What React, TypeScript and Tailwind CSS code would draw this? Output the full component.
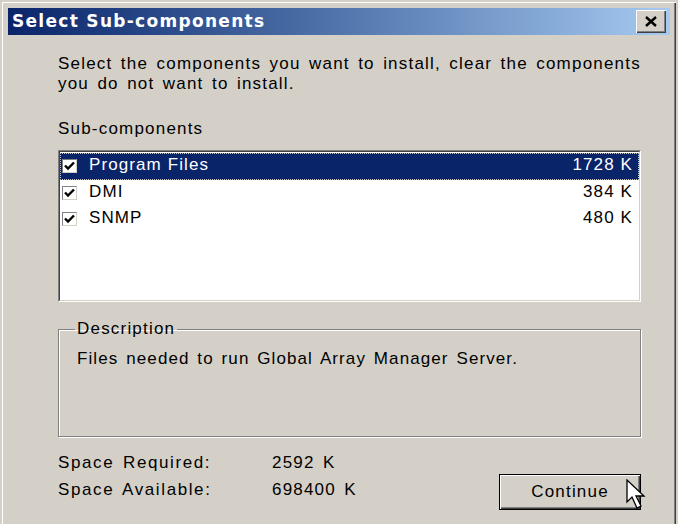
import { useState } from 'react';

type Part = { name: string; size: string };

const parts: Part[] = [
  { name: 'Program Files', size: '1728 K' },
  { name: 'DMI', size: '384 K' },
  { name: 'SNMP', size: '480 K' },
];

const ui = "[font-family:'Liberation_Sans',Arial,sans-serif] text-[17px] leading-[20px] tracking-[1.2px] [word-spacing:2.5px] text-black";

function CheckBox() {
  return (
    <div className="w-[15px] h-[14px] bg-white border border-t-[#808080] border-l-[#808080] border-r-[#d4d0c8] border-b-[#d4d0c8] flex items-center justify-center shrink-0">
      <svg width="11" height="10" viewBox="0 0 11 10">
        <path d="M1 4.5 L4 7.5 L10 1.5" fill="none" stroke="#000" strokeWidth="2.4" />
      </svg>
    </div>
  );
}

function Cursor() {
  return (
    <svg width="26" height="32" viewBox="0 0 26 32" className="absolute left-[626px] top-[479px]">
      <polygon
        points="1,1 1,23 6,18 11,29 15,27 10,17 18,17"
        fill="#fff"
        stroke="#000"
        strokeWidth="1.3"
        strokeLinejoin="miter"
      />
    </svg>
  );
}

export default function App() {
  const [selected] = useState(0);

  return (
    <div className="relative w-[678px] h-[524px] overflow-hidden bg-[#d4d0c8] pt-[2px] pl-[2px]">
      <div className="w-[674px] h-[560px] bg-[#d4d0c8] pt-[6px] pl-[6px] pr-[6px] shadow-[inset_1px_1px_#fff,inset_-1px_0_#404040,inset_-2px_0_#808080]">
        {/* title bar */}
        <div className="h-[27px] flex items-center justify-between bg-linear-to-r from-[#0a246a] to-[#a6caf0] pl-[4px] pr-[4px]">
          <span className="[font-family:'DejaVu_Sans',Verdana,sans-serif] font-bold text-[17px] text-white tracking-[1.3px]">
            Select Sub-components
          </span>
          <button className="w-[30px] h-[23px] bg-[#d4d0c8] flex items-center justify-center shadow-[inset_1px_1px_#fff,inset_-1px_-1px_#404040,inset_-2px_-2px_#808080]">
            <svg width="12" height="11" viewBox="0 0 12 11">
              <path d="M1 1 L11 10 M11 1 L1 10" stroke="#000" strokeWidth="2.4" />
            </svg>
          </button>
        </div>

        <div className={`${ui} ml-[50px] w-[583px]`}>
          <p className="mt-[19px] whitespace-nowrap">
            Select the components you want to install, clear the components
            <br />
            you do not want to install.
          </p>

          <div className="mt-[25px]">Sub-components</div>

          {/* component list */}
          <div className="mt-[11px] h-[152px] border border-t-[#808080] border-l-[#808080] border-r-white border-b-white">
            <div className="h-full bg-white border border-t-[#404040] border-l-[#404040] border-r-[#d4d0c8] border-b-[#d4d0c8] pt-[1px]">
              {parts.map((p, i) => (
                <div
                  key={p.name}
                  className={`h-[26.5px] flex items-center pl-[2px] pr-[6px] ${
                    i === selected
                      ? 'bg-[#0a246a] text-white outline-1 outline-dotted outline-[#c8c8c8] -outline-offset-1'
                      : ''
                  }`}
                >
                  <CheckBox />
                  <span className="ml-[12px] flex-1 pb-[2px] tracking-[1.1px] [word-spacing:0px]">{p.name}</span>
                  <span className="pb-[2px] tracking-[1.1px] [word-spacing:0px]">{p.size}</span>
                </div>
              ))}
            </div>
          </div>

          {/* description group */}
          <fieldset className="mt-[17px] h-[118px] border border-[#808080] shadow-[inset_1px_1px_#fff,1px_1px_#fff] pl-[16px]">
            <legend className="px-[2px]">Description</legend>
            <p className="mt-[10px] ml-[2px] tracking-[1.1px] [word-spacing:2px]">Files needed to run Global Array Manager Server.</p>
          </fieldset>

          <div className="mt-[16px] flex items-start">
            <div className="flex flex-col gap-[7px]">
              <div className="flex">
                <span className="w-[214px] tracking-[1.6px]">Space Required:</span>
                <span>2592 K</span>
              </div>
              <div className="flex">
                <span className="w-[214px] tracking-[1.6px]">Space Available:</span>
                <span>698400 K</span>
              </div>
            </div>
            <button className="ml-auto mt-[21px] w-[142px] h-[36px] bg-[#d4d0c8] border border-black shadow-[inset_1px_1px_#fff,inset_-1px_-1px_#404040,inset_-2px_-2px_#808080] flex items-center justify-center">
              Continue
            </button>
          </div>
        </div>
      </div>
      <Cursor />
    </div>
  );
}
